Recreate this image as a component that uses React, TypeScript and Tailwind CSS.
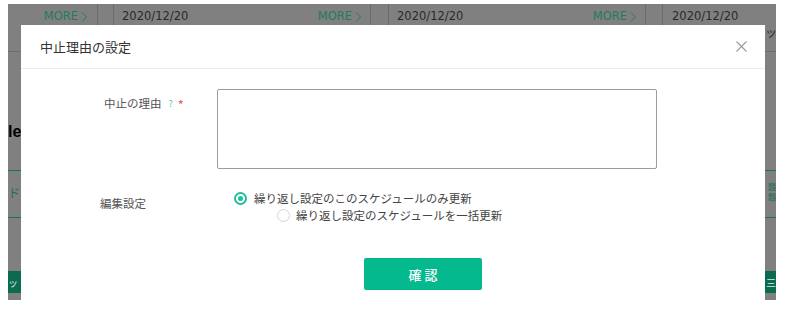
const jp = "font-['Meiryo','Noto_Sans_CJK_JP',sans-serif]";

const Chevron = () => (
  <svg width="7" height="12" viewBox="0 0 7 12" className="mt-[1px]">
    <path d="M1 1.5l4.5 4.5L1 10.5" stroke="currentColor" fill="none" strokeWidth="1" />
  </svg>
);

const More = () => (
  <span className="flex h-[18px] items-center gap-[3px] text-[#237a5c]">
    MORE
    <Chevron />
  </span>
);

const DateCell = ({ last = false }: { last?: boolean }) => (
  <div
    className={
      last
        ? "flex-1 pl-[9px] pt-[3px]"
        : "flex w-[257px] shrink-0 items-start justify-between border-r border-[#6b6b6b] pl-[8px] pr-[8px] pt-[3px]"
    }
  >
    <span className="text-[#2a2a2a]">2020/12/20</span>
    {!last && <More />}
    {last && <div className={`${jp} pl-[93px] text-[12px] leading-[14px] text-[#2a2a2a]`}>ッ</div>}
  </div>
);

const Spacer = ({ w }: { w: string }) => <div className={`${w} shrink-0 border-r border-[#6b6b6b]`} />;

const Backdrop = () => (
  <div className="flex h-full flex-col">
    <div className="flex h-[48px] border-b border-[#6d6d6d] font-['DejaVu_Sans',sans-serif] text-[11.5px] leading-[18px]">
      <div className="flex w-[90px] shrink-0 items-start justify-end border-r border-[#6b6b6b] pr-[9px] pt-[3px]">
        <More />
      </div>
      <Spacer w="w-[16px]" />
      <DateCell />
      <Spacer w="w-[18px]" />
      <DateCell />
      <Spacer w="w-[17px]" />
      <DateCell last />
    </div>
    <div className="h-[118px] pt-[70px] font-['Liberation_Sans',sans-serif] text-[16px] font-bold leading-[20px] text-black">
      le<span className="text-[#8a6a10]">:</span>
    </div>
    <div className={`${jp} flex h-[48px] items-center justify-between border-y border-[#1a7356] text-[12px] text-[#1d6e52]`}>
      <span className="pb-[3px]">ド</span>
      <span className="flex flex-col pb-[4px] text-[8px] leading-[10px]">
        <span>題</span>
        <span>題</span>
      </span>
    </div>
    <div className="h-[53px]" />
    <div className={`${jp} flex h-[22px] items-center justify-between bg-[#0b6b50] text-[10px] text-[#d8e8e2]`}>
      <span>ッ</span>
      <span>三</span>
    </div>
  </div>
);

const CloseIcon = () => (
  <svg width="11" height="11" viewBox="0 0 11 11">
    <path d="M0.5 0.5l10 10M10.5 0.5l-10 10" stroke="#9a9a9a" strokeWidth="1.1" />
  </svg>
);

const Radio = ({ on }: { on?: boolean }) =>
  on ? (
    <span className="flex h-[13px] w-[13px] shrink-0 items-center justify-center rounded-full border-2 border-[#1cbf9a]">
      <span className="h-[5px] w-[5px] rounded-full bg-[#1cbf9a]" />
    </span>
  ) : (
    <span className="h-[13px] w-[13px] shrink-0 rounded-full border border-[#d6d6d6]" />
  );

const Modal = () => (
  <div className={`${jp} absolute left-[13px] top-[21px] h-[300px] w-[744px] bg-white`}>
    <div className="flex h-[44px] items-center justify-between border-b border-[#ececec] pl-[19px] pr-[18px]">
      <span className="text-[13px] text-[#333]">中止理由の設定</span>
      <CloseIcon />
    </div>
    <div className="pt-[20px] text-[11.5px] leading-[17px]">
      <div className="flex">
        <div className="flex w-[196px] shrink-0 items-start pl-[83px] pt-[6px] text-[#555]">
          <span>中止の理由</span>
          <span className="ml-[7px] mt-[3px] text-[9px] leading-[12px] text-[#45c7b0]">?</span>
          <span className="ml-[5px] mt-[3px] text-[13px] leading-[13px] text-[#f05a5a]">*</span>
        </div>
        <textarea className="h-[80px] w-[440px] resize-none rounded-[2px] border border-[#9c9c9c] outline-none" />
      </div>
      <div className="mt-[21px] flex">
        <div className="w-[196px] shrink-0 pl-[79px] pt-[5px] text-[#555]">編集設定</div>
        <div className="flex flex-col pl-[17px] text-[#444]">
          <label className="flex items-center gap-[7px]">
            <Radio on />
            繰り返し設定のこのスケジュールのみ更新
          </label>
          <label className="ml-[43px] flex items-center gap-[6px]">
            <Radio />
            繰り返し設定のスケジュールを一括更新
          </label>
        </div>
      </div>
      <button className="ml-[343px] mt-[34px] flex h-[32px] w-[118px] items-center justify-center rounded-[2px] bg-[#05b98f] pl-[3px] text-[13px] font-medium tracking-[3px] text-white">
        確認
      </button>
    </div>
  </div>
);

export default function App() {
  return (
    <div className="h-[318px] w-[785px] bg-white pb-[18px] pl-[8px] pr-[9px] pt-[4px]">
      <div className="relative h-[296px] overflow-hidden bg-[#808080]">
        <Backdrop />
        <Modal />
      </div>
    </div>
  );
}
